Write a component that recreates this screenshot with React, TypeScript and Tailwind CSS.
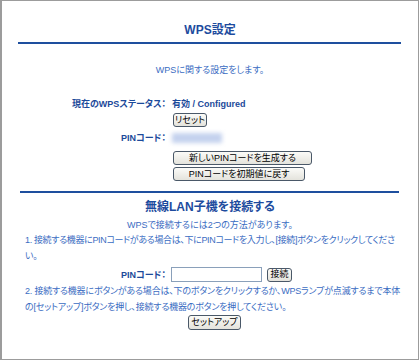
const btn =
  "flex h-[14px] items-center justify-center rounded-[3px] border border-[#4a5868] bg-gradient-to-b from-[#fbfbf8] to-[#e4e3dc] text-[9px] leading-none text-black";

export default function App() {
  return (
    <div className="h-[361px] w-[420px] bg-white font-['Liberation_Sans','Noto_Sans_CJK_JP',sans-serif] [font-feature-settings:'palt']">
      <div className="flex h-[360px] w-[419px] flex-col border-t border-r border-b border-l-2 border-[#9c9c9c]">
        <h1 className="mt-[21px] text-center text-[12px] font-bold leading-[16px] text-[#1d4b9e]">WPS設定</h1>
        <div className="mt-[4px] ml-[16px] h-[2px] w-[383px] bg-[#1e4f9e]" />
        <p className="mt-[20px] text-center text-[9px] leading-[12px] text-[#3a6cc2]">WPSに関する設定をします。</p>

        <div className="mt-[22px] grid grid-cols-[164px_1fr] gap-x-[6px] text-[9px] leading-[12px]">
          <div className="text-right font-bold text-[#1c4a9a]">現在のWPSステータス：</div>
          <div className="font-bold text-[#1c4a9a]">有効 / Configured</div>
          <div />
          <div className="mt-[3px] ml-[1px]">
            <button className={`${btn} w-[34px]`}>リセット</button>
          </div>
          <div className="mt-[5px] text-right font-bold text-[#1c4a9a]">PINコード：</div>
          <div className="mt-[5px] flex h-[12px] items-center">
            <div className="h-[10px] w-[50px] bg-[#c4d2ee] blur-[2px]" />
          </div>
          <div />
          <div className="mt-[7px] ml-[1px] flex flex-col gap-[2px]">
            <button className={`${btn} w-[139px]`}>新しいPINコードを生成する</button>
            <button className={`${btn} w-[132px]`}>PINコードを初期値に戻す</button>
          </div>
        </div>

        <div className="mt-[10px] ml-[18px] h-[2px] w-[379px] bg-[#1e4f9e]" />
        <h2 className="mt-[6px] text-center text-[12px] font-bold leading-[16px] text-[#1d4b9e]">無線LAN子機を接続する</h2>
        <p className="mt-[4px] text-center text-[9px] leading-[12px] text-[#3a6cc2]">WPSで接続するには2つの方法があります。</p>

        <p className="mt-[1px] pl-[23px] text-[9px] leading-[16px] tracking-[-0.35px] whitespace-nowrap text-[#3a6cc2]">
          1. 接続する機器にPINコードがある場合は、下にPINコードを入力し、[接続]ボタンをクリックしてくださ
          <br />
          い。
        </p>

        <div className="mt-[3px] grid grid-cols-[164px_1fr] items-center gap-x-[5px] text-[9px] leading-[12px]">
          <div className="text-right font-bold text-[#1c4a9a]">PINコード：</div>
          <div className="flex items-center gap-[5px]">
            <input className="h-[15px] w-[91px] border border-[#8aa0ba] bg-white" />
            <button className={`${btn} w-[25px]`}>接続</button>
          </div>
        </div>

        <p className="mt-[1px] pl-[23px] text-[9px] leading-[16px] tracking-[-0.2px] whitespace-nowrap text-[#3a6cc2]">
          2. 接続する機器にボタンがある場合は、下のボタンをクリックするか、WPSランプが点滅するまで本体
          <br />
          の[セットアップ]ボタンを押し、接続する機器のボタンを押してください。
        </p>

        <div className="flex justify-center pl-[9px]">
          <button className={`${btn} h-[15px] w-[53px]`}>セットアップ</button>
        </div>
      </div>
    </div>
  );
}
